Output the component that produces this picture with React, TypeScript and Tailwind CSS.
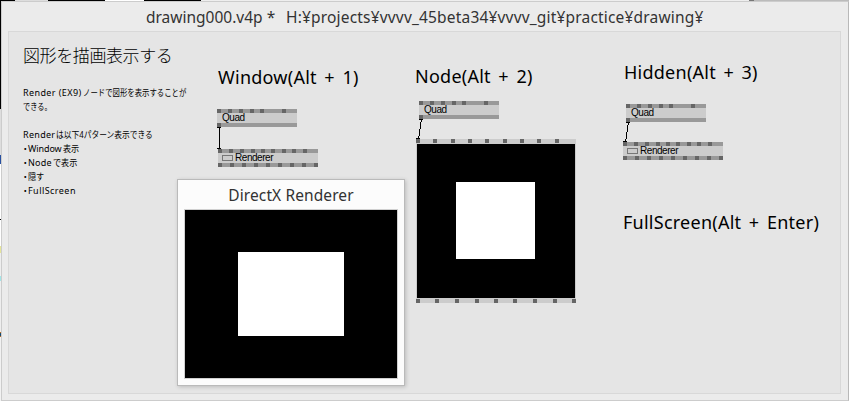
type NodeProps = { label: string; pos: string; width: string; top: number[]; bottom: number[]; icon?: boolean };

const QUAD_TOP = [0, 11, 22, 33, 43, 65];
const RENDER_TOP = [0, 11, 22, 33, 43, 53, 64, 74, 85];
const RENDER_BOTTOM = [0, 12, 24, 36, 48, 60, 72, 84, 96];
const VIEW_TOP = [0, 17, 35, 52, 69, 87, 104, 121, 139];
const VIEW_BOTTOM = [0, 19, 39, 59, 78, 97, 117, 137, 156];

function Pins({ at, className }: { at: number[]; className: string }) {
  return (
    <div className={`relative w-full ${className}`}>
      {at.map((x) => (
        <span key={x} className="absolute top-0 size-1 bg-[#666]" style={{ left: x }} />
      ))}
    </div>
  );
}

function PatchNode({ label, pos, width, top, bottom, icon }: NodeProps) {
  return (
    <div className={`absolute flex flex-col bg-[#ccc] ${pos} ${width}`}>
      <Pins at={top} className="h-1 bg-[#999]" />
      <div className="flex h-[10px] items-center pl-1 font-['Liberation_Sans',sans-serif] text-[10px] leading-[10px] tracking-[-0.45px] whitespace-pre text-black">
        {icon && <span className="mr-[2px] h-[6px] w-[11px] border border-[#777]" />}
        <span className={icon ? '' : 'pl-px'}>{label}</span>
      </div>
      <Pins at={bottom} className="h-1 bg-[#999]" />
    </div>
  );
}

function Heading({ children, pos }: { children: string; pos: string }) {
  return (
    <h2 className={`absolute font-['Noto_Sans',sans-serif] text-[18px] leading-6 tracking-[0.25px] [word-spacing:2.6px] whitespace-pre text-black ${pos}`}>
      {children}
    </h2>
  );
}

function Kana({ children, fit }: { children: string; fit: string }) {
  return <span className={`inline-block origin-left ${fit}`}>{children}</span>;
}

function Latin({ children, width }: { children: string; width: string }) {
  return <span className={`inline-block ${width}`}>{children}</span>;
}

function Bullet() {
  return <span className="inline-block w-[5px] font-['Noto_Sans_CJK_JP',sans-serif] [font-feature-settings:'halt']">・</span>;
}

function Wire({ x1, y1, x2, y2 }: { x1: number; y1: number; x2: number; y2: number }) {
  return (
    <g stroke="#000" strokeWidth="1" shapeRendering="crispEdges">
      <path d={`M${x1 - 2} ${y1 + 0.5}h4M${x2 - 2} ${y2 - 0.5}h4`} />
      <path d={`M${x1 + 0.5} ${y1}L${x2 + 0.5} ${y2}`} />
    </g>
  );
}

export default function App() {
  return (
    <div className="relative h-[401px] w-[849px] overflow-hidden bg-[#f2f2f2]">
      <div className="absolute top-0 left-0 flex h-px w-full">
        <i className="w-[15px] bg-black" />
        <i className="w-[33px] bg-[#ddd]" />
        <i className="w-[57px] bg-black" />
        <i className="w-[39px] bg-white" />
        <i className="w-[57px] bg-black" />
        <i className="w-[548px] bg-[#eee]" />
        <i className="w-[5px] bg-[#777]" />
        <i className="flex-1 bg-[#bbb]" />
      </div>
      <div className="absolute top-0 left-0 flex h-full w-px flex-col">
        <i className="h-[109px] bg-black" />
        <i className="h-[46px] bg-[#ddd]" />
        <i className="h-[9px] bg-[#2850a0]" />
        <i className="h-[55px] bg-white" />
        <i className="h-px bg-black" />
        <i className="h-[26px] bg-white" />
        <i className="h-[7px] bg-[#e5e59a]" />
        <i className="h-[23px] bg-[#eee]" />
        <i className="h-[5px] bg-[#a3e5e7]" />
        <i className="h-[51px] bg-[#eee]" />
        <i className="h-[5px] border-y border-[#b86a20] bg-[#174a70]" />
      </div>

      <main className="ml-px flex h-[401px] w-[848px] flex-col pt-px">
        <div className="flex h-[400px] flex-col border border-[#ccc] border-r-[#b8b8b8] bg-[#ebebeb] px-[6px] pb-[6px]">
          <header className="flex h-[29px] shrink-0 pl-[138px] font-['Noto_Sans',sans-serif] text-[15.5px] leading-[31px] whitespace-pre text-[#333]">
            <span className="w-[140px]">drawing000.v4p *</span>
            <span className="tracking-[0.18px]">H:¥projects¥vvvv_45beta34¥vvvv_git¥practice¥drawing¥</span>
          </header>

          <section className="relative w-[833px] flex-1 border border-[#d8d8d8] bg-[#e5e5e5]">
            <article className="flex flex-col pt-[11px] pl-[14px] font-['Noto_Sans','Noto_Sans_CJK_JP',sans-serif] text-black">
              <h1 className="font-['Noto_Sans_CJK_JP',sans-serif] text-[17px] leading-6 font-light tracking-[-0.4px]">図形を描画表示する</h1>
              <div className="mt-[19px] text-[9px] leading-[14px] whitespace-pre">
                <p className="h-[14px]"><Latin width="w-[60px] tracking-[0.4px]">Render (EX9)</Latin><Kana fit="scale-x-[0.82]">ノードで図形を表示することが</Kana></p>
                <p className="h-[14px]"><Kana fit="scale-x-[0.8]">できる。</Kana></p>
                <p className="mt-[14px] h-[14px]"><Latin width="w-[33px] tracking-[0.3px]">Render</Latin><Kana fit="scale-x-[0.86]">は以下4パターン表示できる</Kana></p>
                <p className="h-[14px]"><Bullet /><Latin width="w-[35px] tracking-[-0.1px]">Window</Latin><Kana fit="scale-x-[0.9]">表示</Kana></p>
                <p className="h-[14px]"><Bullet /><Latin width="w-[25px] tracking-[0.2px]">Node</Latin><Kana fit="scale-x-[0.9]">で表示</Kana></p>
                <p className="h-[14px]"><Bullet /><Kana fit="scale-x-[0.9]">隠す</Kana></p>
                <p className="h-[14px]"><Bullet /><Latin width="w-[50px] tracking-[0.45px]">FullScreen</Latin></p>
              </div>
            </article>

            <Heading pos="left-[209px] top-[33px]">Window(Alt + 1)</Heading>
            <Heading pos="left-[406px] top-[32px]">Node(Alt + 2)</Heading>
            <Heading pos="left-[615px] top-[28px]">Hidden(Alt + 3)</Heading>
            <Heading pos="left-[614px] top-[178px]">FullScreen(Alt + Enter)</Heading>

            <PatchNode label="Quad" pos="left-[208px] top-[77px]" width="w-20" top={QUAD_TOP} bottom={[0]} />
            <PatchNode label="Renderer" pos="left-[209px] top-[117px]" width="w-[100px]" top={RENDER_TOP} bottom={RENDER_BOTTOM} icon />
            <PatchNode label="Quad" pos="left-[410px] top-[69px]" width="w-20" top={QUAD_TOP} bottom={[0]} />
            <PatchNode label="Quad" pos="left-[617px] top-[72px]" width="w-20" top={QUAD_TOP} bottom={[0]} />
            <PatchNode label="Renderer" pos="left-[614px] top-[110px]" width="w-[100px]" top={RENDER_TOP} bottom={RENDER_BOTTOM} icon />

            <div className="absolute top-[107px] left-[407px] flex h-[164px] w-40 flex-col bg-[#ccc]">
              <Pins at={VIEW_TOP} className="h-[5px]" />
              <div className="mx-px mb-px flex-1 bg-black pt-[38px] pl-[39px]">
                <div className="h-[77px] w-[79px] bg-white" />
              </div>
              <Pins at={VIEW_BOTTOM} className="h-1" />
            </div>

            <svg className="pointer-events-none absolute top-0 left-0" width="831" height="361">
              <Wire x1={210} y1={95} x2={210} y2={117} />
              <Wire x1={412} y1={87} x2={409} y2={107} />
              <Wire x1={619} y1={90} x2={616} y2={110} />
            </svg>

            <div className="absolute top-[147px] left-[168px] flex h-[207px] w-[228px] flex-col border border-[#bababa] bg-[#fcfcfc] px-[6px] pb-[6px] shadow-[1px_1px_4px_rgba(0,0,0,0.18)]">
              <div className="h-[29px] text-center font-['Noto_Sans',sans-serif] text-[15.5px] leading-[31px] tracking-[0.1px] whitespace-pre text-[#333]">DirectX Renderer</div>
              <div className="flex flex-1 items-start border border-[#d0d0d0] bg-black pt-[42px] pl-[53px]">
                <div className="h-[84px] w-[106px] bg-white" />
              </div>
            </div>
          </section>
        </div>
      </main>
    </div>
  );
}
